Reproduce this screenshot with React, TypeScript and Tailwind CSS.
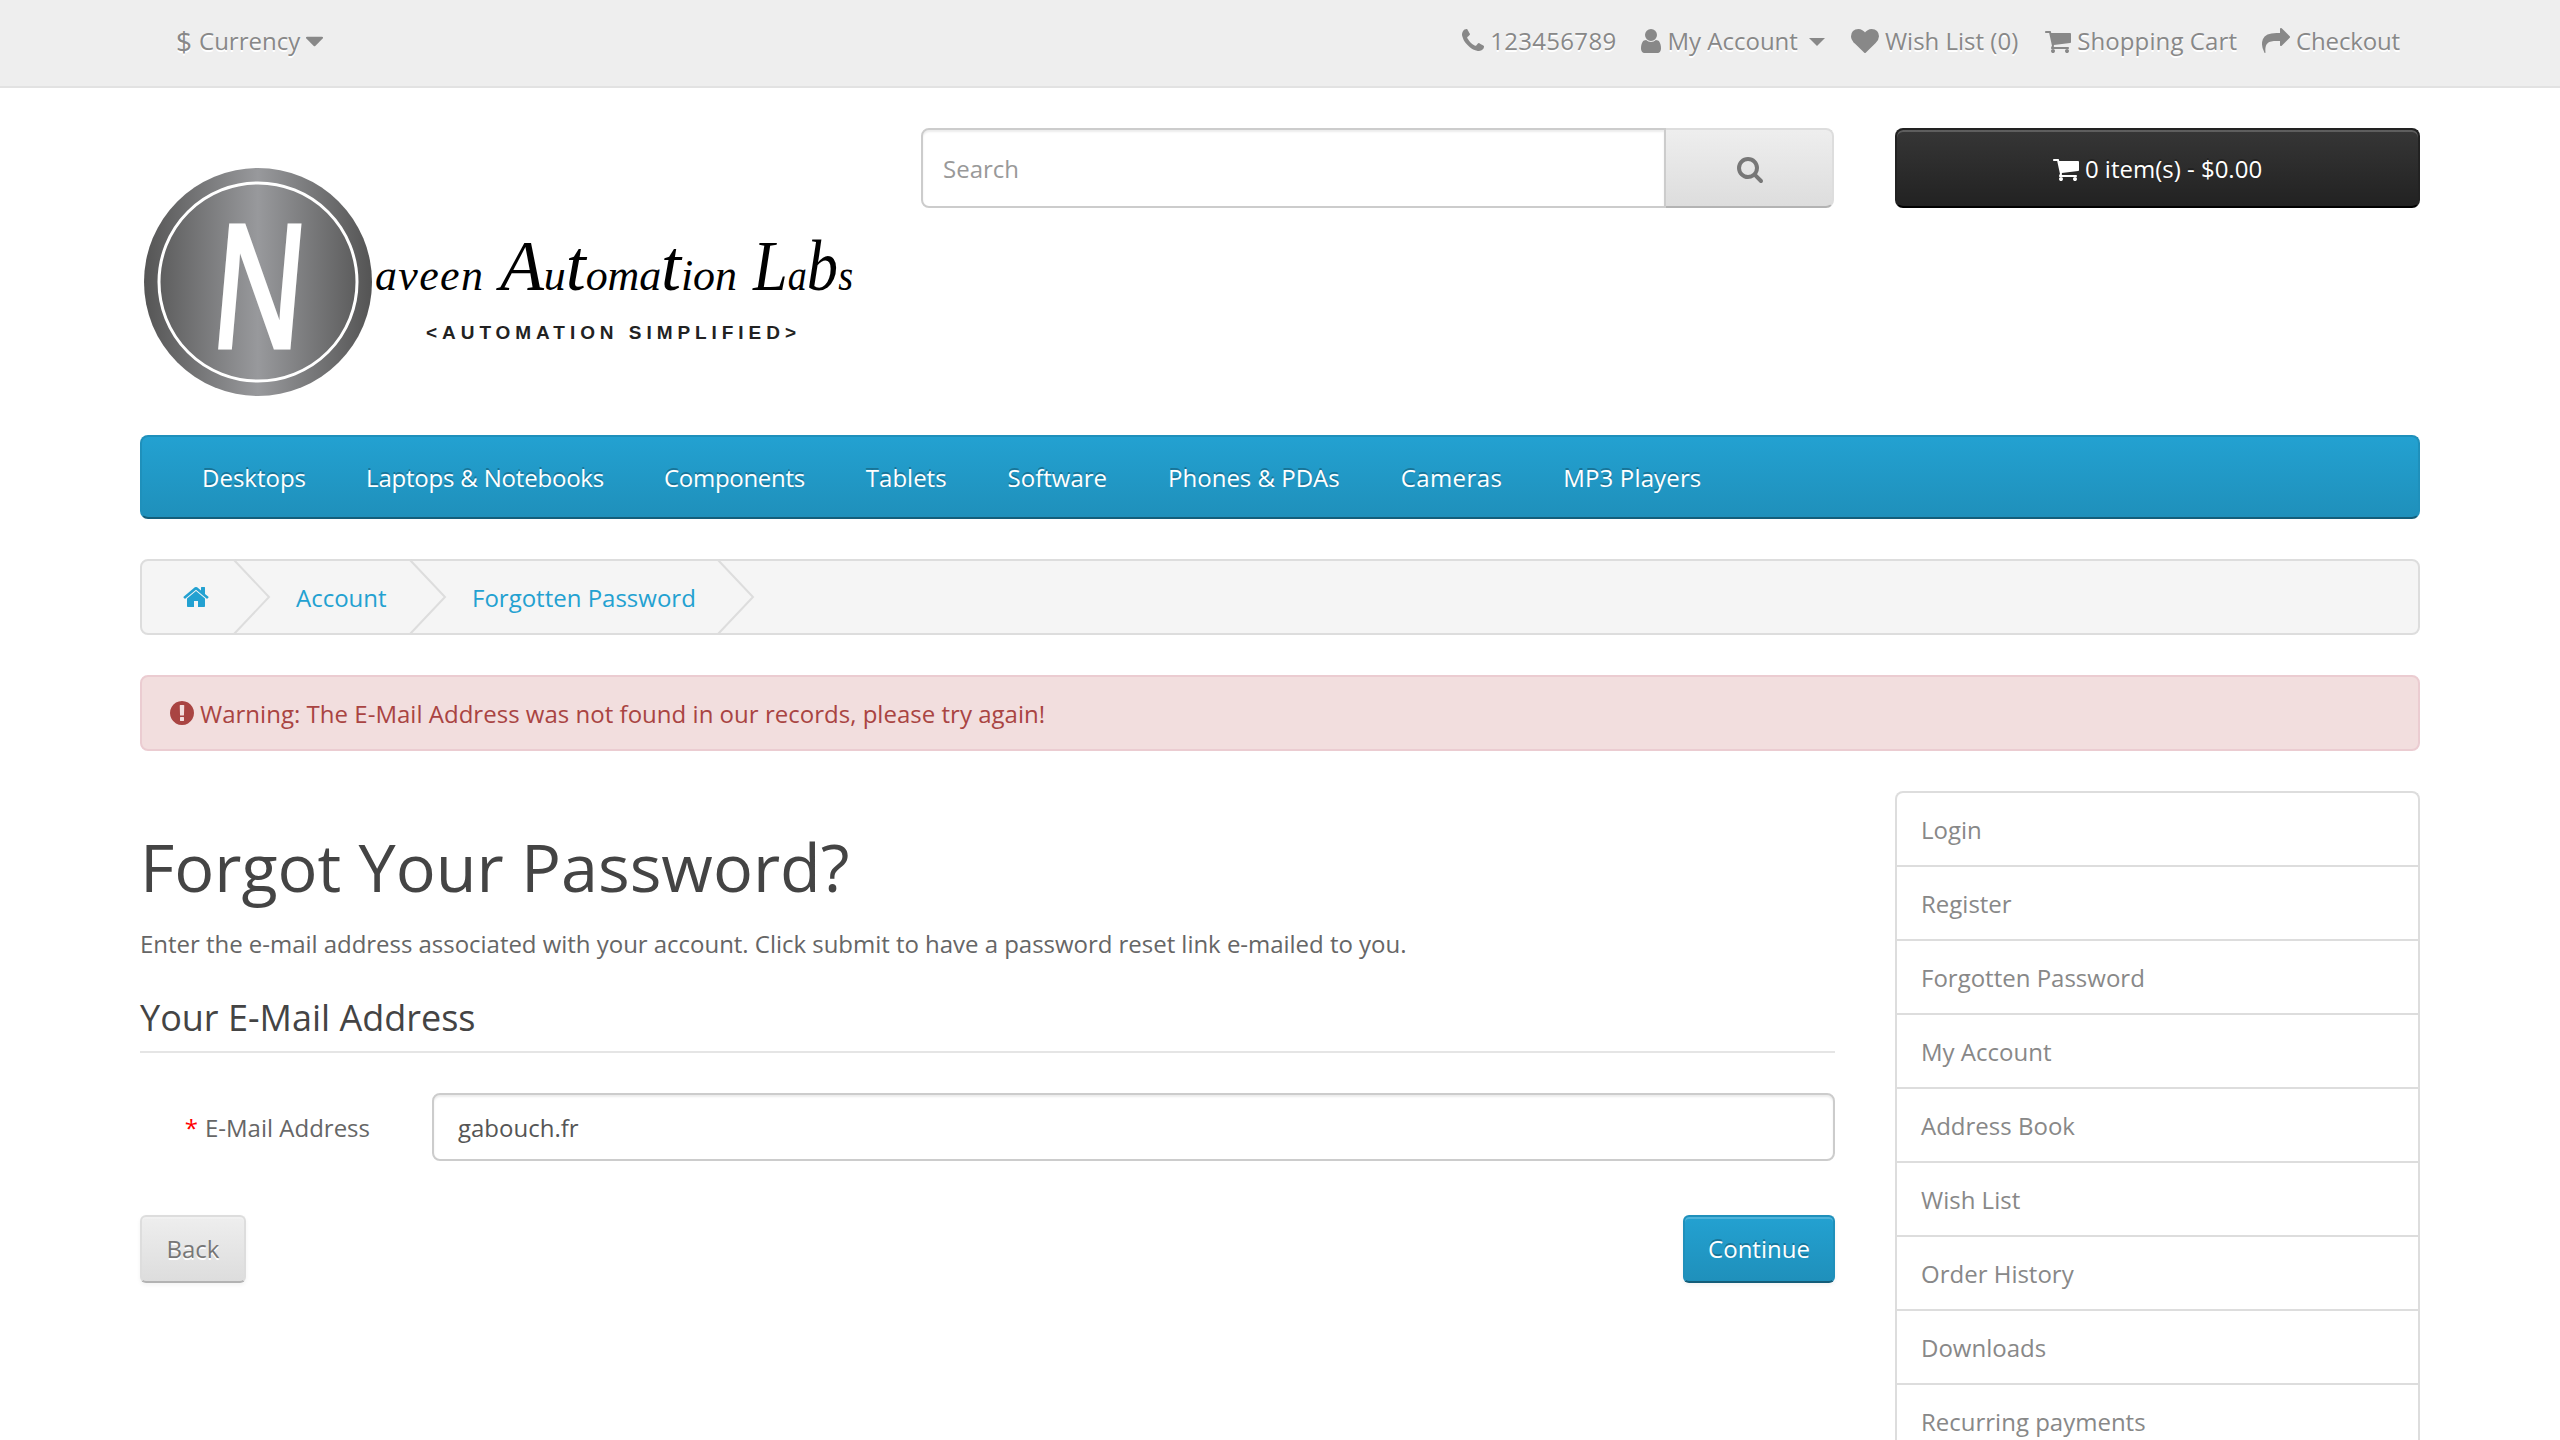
import React from 'react';

const navItems = [
  { label: 'Desktops', className: '' },
  { label: 'Laptops & Notebooks', className: 'tracking-[-0.2px]' },
  { label: 'Components', className: 'tracking-[-0.3px]' },
  { label: 'Tablets', className: 'ml-[1px]' },
  { label: 'Software', className: 'ml-[1px]' },
  { label: 'Phones & PDAs', className: 'ml-[1px]' },
  { label: 'Cameras', className: 'ml-[1px] tracking-[0.4px]' },
  { label: 'MP3 Players', className: 'ml-[1px] tracking-[0.15px]' },
];
const sideLinks = ['Login', 'Register', 'Forgotten Password', 'My Account', 'Address Book', 'Wish List', 'Order History', 'Downloads', 'Recurring payments'];

// Font Awesome 4 shapes, on the 1792 grid
const icons = {
  phone: { box: '192 0 1408 1792', d: 'M1600 1240q0 27-10 70.5t-21 68.5q-21 50-122 106-94 51-186 51-27 0-53-3.5t-57.5-12.5-47-14.5-55.5-20.5-49-18q-98-35-175-83-127-79-264-216t-216-264q-48-77-83-175-3-9-18-49t-20.5-55.5-14.5-47-12.5-57.5-3.5-53q0-92 51-186 56-101 106-122 25-11 68.5-21t70.5-10q14 0 21 3 18 6 53 76 11 19 30 54t35 63.5 31 53.5q3 4 17.5 25t21.5 35.5 7 28.5q0 20-28.5 50t-62 55-62 53-28.5 46q0 9 5 22.5t8.5 20.5 14 24 11.5 19q76 137 174 235t235 174q2 1 19 11.5t24 14 20.5 8.5 22.5 5q18 0 46-28.5t53-62 55-62 50-28.5q14 0 28.5 7t35.5 21.5 25 17.5q25 15 53.5 31t63.5 35 54 30q70 35 76 53 3 7 3 21z' },
  user: { box: '256 0 1280 1792', d: 'M1536 1399q0 109-62.5 187t-150.5 78h-854q-88 0-150.5-78t-62.5-187q0-85 8.5-160.5t31.5-152 58.5-131 94-89 134.5-34.5q131 128 313 128t313-128q76 0 134.5 34.5t94 89 58.5 131 31.5 152 8.5 160.5zm-256-887q0 159-112.5 271.5t-271.5 112.5-271.5-112.5-112.5-271.5 112.5-271.5 271.5-112.5 271.5 112.5 112.5 271.5z' },
  heart: { box: '0 0 1792 1792', d: 'M896 1664q-26 0-44-18l-624-602q-10-8-27.5-26t-55.5-65.5-68-97.5-53.5-121-23.5-138q0-220 127-344t351-124q62 0 126.5 21.5t120 58 95.5 68.5 76 68q36-36 76-68t95.5-68.5 120-58 126.5-21.5q224 0 351 124t127 344q0 221-229 450l-623 600q-18 18-44 18z' },
  cart: { box: '64 0 1664 1792', d: 'M704 1536q0 52-38 90t-90 38-90-38-38-90 38-90 90-38 90 38 38 90zm896 0q0 52-38 90t-90 38-90-38-38-90 38-90 90-38 90 38 38 90zm128-1088v512q0 24-16.5 42.5t-40.5 21.5l-1044 122q13 60 13 70 0 16-24 64h920q26 0 45 19t19 45-19 45-45 19h-1024q-26 0-45-19t-19-45q0-11 8-31.5t16-36 21.5-40 15.5-29.5l-177-823h-204q-26 0-45-19t-19-45 19-45 45-19h256q16 0 28.5 6.5t19.5 15.5 13 24.5 8 26 5.5 29.5 4.5 26h1201q26 0 45 19t19 45z' },
  share: { box: '0 0 1792 1792', d: 'M1792 640q0 26-19 45l-512 512q-19 19-45 19t-45-19-19-45v-256h-224q-98 0-175.5 6t-154 21.5-133 42.5-105.5 69.5-80 101-48.5 138.5-17.5 181q0 55 5 123 0 6 2.5 23.5t2.5 26.5q0 15-8.5 25t-23.5 10q-16 0-28-17-7-9-13-22t-13.5-30-10.5-24q-127-285-127-451 0-199 53-333 162-403 875-403h224v-256q0-26 19-45t45-19 45 19l512 512q19 19 19 45z' },
  search: { box: '64 0 1664 1792', d: 'M1216 832q0-185-131.5-316.5t-316.5-131.5-316.5 131.5-131.5 316.5 131.5 316.5 316.5 131.5 316.5-131.5 131.5-316.5zm512 832q0 52-38 90t-90 38q-54 0-90-38l-343-342q-179 124-399 124-143 0-273.5-55.5t-225-150-150-225-55.5-273.5 55.5-273.5 150-225 225-150 273.5-55.5 273.5 55.5 225 150 150 225 55.5 273.5q0 220-124 399l343 343q37 37 37 90z' },
  home: { box: '64 0 1664 1792', d: 'M1472 992v480q0 26-19 45t-45 19h-384v-384h-256v384h-384q-26 0-45-19t-19-45v-480q0-1 .5-3t.5-3l575-474 575 474q1 2 1 6zm223-69l-62 74q-8 9-21 11h-3q-13 0-21-7l-692-577-692 577q-12 8-24 7-13-2-21-11l-62-74q-8-10-7-23.5t11-21.5l719-599q32-26 76-26t76 26l244 204v-195q0-14 9-23t23-9h192q14 0 23 9t9 23v408l219 182q10 8 11 21.5t-7 23.5z' },
  alert: { box: '128 0 1536 1792', d: 'M896 128q209 0 385.5 103t279.5 279.5 103 385.5-103 385.5-279.5 279.5-385.5 103-385.5-103-279.5-279.5-103-385.5 103-385.5 279.5-279.5 385.5-103zm128 1247v-190q0-14-9-23.5t-22-9.5h-192q-13 0-23 10t-10 23v190q0 13 10 23t23 10h192q13 0 22-9.5t9-23.5zm-2-344l18-621q0-12-10-18-10-8-24-8h-220q-14 0-24 8-10 6-10 18l17 621q0 10 10 17.5t24 7.5h185q14 0 23.5-7.5t10.5-17.5z' },
  caret: { box: '384 0 1024 1792', d: 'M1408 704q0 26-19 45l-448 448q-19 19-45 19t-45-19l-448-448q-19-19-19-45t19-45 45-19h896q26 0 45 19t19 45z' },
};

function Fa({ name, className }: { name: keyof typeof icons; className: string }) {
  return (
    <svg viewBox={icons[name].box} fill="currentColor" className={`shrink-0 ${className}`}>
      <path d={icons[name].d} />
    </svg>
  );
}

function Logo() {
  const script = { fontFamily: "'Liberation Serif', serif", fontStyle: 'italic', fontSize: 44, fill: '#000000' };
  return (
    <svg width="730" height="290" viewBox="0 0 730 290" className="block">
      <defs>
        <linearGradient id="disc" x1="0" x2="1" y1="0" y2="0">
          <stop offset="0" stopColor="#555555" />
          <stop offset="0.5" stopColor="#98999c" />
          <stop offset="1" stopColor="#545454" />
        </linearGradient>
      </defs>
      <circle cx="118" cy="154" r="114" fill="url(#disc)" />
      <circle cx="118" cy="154" r="99" fill="none" stroke="#ffffff" strokeWidth="3" />
      <text transform="translate(70 219) skewX(-5) scale(0.7 1)" fontFamily="'Liberation Sans', sans-serif" fontSize="176" fill="#ffffff" stroke="#ffffff" strokeWidth="5">N</text>
      <text x="235" y="162" textLength="108" {...script}>aveen</text>
      <text x="360" y="162" textLength="237" {...script}>
        <tspan fontSize="72">A</tspan>u<tspan fontSize="72">t</tspan>oma<tspan fontSize="72">t</tspan>ion
      </text>
      <text x="613" y="162" textLength="100" lengthAdjust="spacingAndGlyphs" {...script}>
        <tspan fontSize="72">L</tspan>a<tspan fontSize="72">b</tspan>s
      </text>
      <text x="286" y="211" textLength="370" fontFamily="'Liberation Sans', sans-serif" fontWeight="700" fontSize="19" fill="#222222">&lt;AUTOMATION SIMPLIFIED&gt;</text>
    </svg>
  );
}

function Chevron() {
  return (
    <svg width="38" height="76" viewBox="0 0 38 76" className="absolute -right-[37px] -top-[2px]">
      <path d="M1 1 L36 38 L1 75" fill="none" stroke="#dddddd" strokeWidth="2" />
    </svg>
  );
}

export default function App() {
  return (
    <div className="h-screen overflow-hidden bg-white font-['Open_Sans',sans-serif] text-[24px] leading-[40px] text-[#666666]">
      {/* Top bar */}
      <nav className="h-[88px] border-b-2 border-[#e2e2e2] bg-[#eeeeee] [text-shadow:0_2px_0_#fff]">
        <div className="mx-auto flex h-full w-[2280px] items-center justify-between pb-[4px] text-[#888888]">
          <div className="ml-[36px] flex items-center">
            <span className="mr-[7px] text-[28px]">$</span>
            <span>Currency</span>
            <Fa name="caret" className="ml-[6px] h-[30px] w-[17px]" />
          </div>
          <ul className="mr-[20px] flex items-center">
            <li className="mr-[25px] flex items-center gap-[6px]"><Fa name="phone" className="h-[28px] w-[22px]" /><span className="tracking-[0.3px]">123456789</span></li>
            <li className="mr-[26px] flex items-center gap-[6px]">
              <Fa name="user" className="h-[28px] w-[20px]" />My Account
              <span className="ml-[5px] mt-[2px] h-0 w-0 border-x-[8px] border-t-[8px] border-x-transparent border-t-[#888888]" />
            </li>
            <li className="mr-[27px] flex items-center gap-[6px]"><Fa name="heart" className="h-[28px] w-[28px]" />Wish List (0)</li>
            <li className="mr-[25px] flex items-center gap-[6px]"><Fa name="cart" className="h-[28px] w-[26px]" /><span className="tracking-[0.1px]">Shopping Cart</span></li>
            <li className="flex items-center gap-[6px]"><Fa name="share" className="h-[28px] w-[28px]" /><span className="tracking-[-0.15px]">Checkout</span></li>
          </ul>
        </div>
      </nav>

      {/* Header */}
      <header className="mx-auto flex h-[347px] w-[2280px] items-start pt-[40px]">
        <div className="w-[781px] shrink-0"><Logo /></div>
        <div className="flex h-[80px] w-[913px] shrink-0">
          <div className="flex h-full flex-1 items-center rounded-l-[8px] border-2 border-[#cccccc] bg-white pl-[20px] pt-[2px] text-[#999999] shadow-[inset_0_2px_2px_rgba(0,0,0,0.075)]">Search</div>
          <button className="flex h-full w-[168px] items-center justify-center rounded-r-[8px] border-2 border-l-0 border-[#dddddd] border-b-[#b3b3b3] bg-gradient-to-b from-[#eeeeee] to-[#dddddd] pl-[2px] pt-[2px] text-[#777777] [filter:drop-shadow(0_1px_0_#fff)]">
            <Fa name="search" className="h-[28px] w-[26px]" />
          </button>
        </div>
        <button className="ml-[61px] flex h-[80px] w-[525px] items-center justify-center gap-[6px] rounded-[8px] border-2 border-[#222222] border-b-black bg-gradient-to-b from-[#363636] to-[#222222] pt-[2px] text-white shadow-[inset_0_2px_0_rgba(255,255,255,0.2)] [text-shadow:0_-2px_0_rgba(0,0,0,0.25)]">
          <Fa name="cart" className="h-[28px] w-[26px]" />
          0 item(s) - $0.00
        </button>
      </header>

      <div className="mx-auto w-[2280px]">
        {/* Menu */}
        <div className="flex h-[84px] items-center rounded-[8px] border-2 border-[#1f90bb] border-b-[#145e7a] bg-gradient-to-b from-[#23a1d1] to-[#1f90bb] pl-[30px] pt-[2px] text-white">
          {navItems.map((item) => (
            <a key={item.label} className={`px-[30px] [text-shadow:0_-2px_0_rgba(0,0,0,0.25)] ${item.className}`}>{item.label}</a>
          ))}
        </div>

        {/* Breadcrumb */}
        <ul className="mt-[40px] flex h-[76px] items-center rounded-[8px] border-2 border-[#dddddd] bg-[#f5f5f5] text-[#23a1d1]">
          <li className="relative flex h-full w-[92px] items-center pl-[41px]">
            <Fa name="home" className="h-[28px] w-[26px]" />
            <Chevron />
          </li>
          <li className="relative flex h-full w-[176px] items-center pl-[62px] pt-[2px]">
            Account
            <Chevron />
          </li>
          <li className="relative flex h-full w-[308px] items-center pl-[62px] pt-[2px]">
            Forgotten Password
            <Chevron />
          </li>
        </ul>

        {/* Alert */}
        <div className="mt-[40px] flex h-[76px] items-center gap-[6px] rounded-[8px] border-2 border-[#ebccd1] bg-[#f2dede] pl-[28px] text-[#a94442]">
          <Fa name="alert" className="h-[28px] w-[24px]" />
          <span className="pt-[2px] tracking-[0.02px]">Warning: The E-Mail Address was not found in our records, please try again!</span>
        </div>

        <div className="mt-[40px] flex items-start justify-between">
          {/* Main column */}
          <main className="w-[1695px]">
            <h1 className="mt-[38px] text-[66.5px] leading-[74px] text-[#444444]">Forgot Your Password?</h1>
            <p className="mt-[21px] tracking-[-0.03px]">Enter the e-mail address associated with your account. Click submit to have a password reset link e-mailed to you.</p>
            <div className="mt-[34px] border-b-2 border-[#e5e5e5] pb-[13px] text-[36px] leading-[40px] text-[#444444]">Your E-Mail Address</div>
            <div className="mt-[40px] flex h-[68px] items-center">
              <label className="w-[292px] shrink-0 pr-[62px] pt-[2px] text-right">
                <span className="mr-[7px] text-[#ff0000]">*</span>E-Mail Address
              </label>
              <div className="flex h-full flex-1 items-center rounded-[8px] border-2 border-[#cccccc] bg-white pl-[24px] pt-[2px] text-[#555555] shadow-[inset_0_2px_2px_rgba(0,0,0,0.075)]">gabouch.fr</div>
            </div>
            <div className="mt-[54px] flex justify-between">
              <button className="h-[68px] w-[106px] rounded-[6px] border-2 border-[#dddddd] border-b-[#b3b3b3] bg-gradient-to-b from-[#eeeeee] to-[#dddddd] text-[#777777] shadow-[inset_0_2px_0_rgba(255,255,255,0.2),0_2px_4px_rgba(0,0,0,0.05)] [text-shadow:0_2px_0_#fff]">Back</button>
              <button className="h-[68px] w-[152px] rounded-[6px] border-2 border-[#1f90bb] border-b-[#145e7a] bg-gradient-to-b from-[#23a1d1] to-[#1f90bb] text-white shadow-[inset_0_2px_0_rgba(255,255,255,0.2),0_2px_4px_rgba(0,0,0,0.05)] [text-shadow:0_-2px_0_rgba(0,0,0,0.25)]">Continue</button>
            </div>
          </main>

          {/* Sidebar */}
          <aside className="w-[525px] overflow-hidden rounded-[8px] border-2 border-b-0 border-[#dddddd]">
            {sideLinks.map((link, i) => (
              <a key={link} className={i === 0 ? 'flex h-[72px] items-center pl-[24px] pt-[2px] text-[#888888]' : 'flex h-[74px] items-center border-t-2 border-[#dddddd] pl-[24px] pt-[2px] text-[#888888]'}>{link}</a>
            ))}
          </aside>
        </div>
      </div>
    </div>
  );
}
